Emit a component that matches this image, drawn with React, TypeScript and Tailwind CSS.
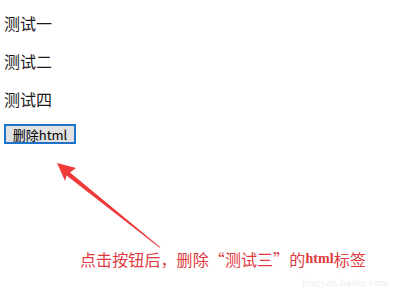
export default function App() {
  const cjk = { fontFamily: '"Noto Sans CJK SC", "Liberation Sans", sans-serif' };

  return (
    <div className="relative w-[406px] h-[298px] bg-white overflow-hidden" style={cjk}>
      <div className="flex flex-col items-start pl-[4px] pt-[12px] text-[16px] leading-[22px] text-[#1a1a1a]">
        <p>测试一</p>
        <p className="mt-[16px]">测试二</p>
        <p className="mt-[16px]">测试四</p>
        <button className="mt-[14px] w-[72px] h-[20px] flex items-center justify-center border-2 border-[#1c73c9] bg-[#e1e1e1] text-[13px] leading-none text-black">
          删除html
        </button>
      </div>

      {/* annotation arrow */}
      <svg className="absolute left-0 top-0" width="406" height="298" viewBox="0 0 406 298">
        <polygon
          points="57,163 76,168 70,172.5 160.4,247.3 159.6,247.7 66.5,175.5 65,181"
          fill="#f0393a"
        />
      </svg>

      {/* faint watermark */}
      <div className="absolute left-[302px] top-[277px] text-[11px] leading-none text-[#eeeeee] tracking-wide" style={{ fontFamily: '"Liberation Serif", serif' }}>
        jingyan.baidu.com
      </div>

      <div className="absolute left-[80px] top-[249px] flex items-center text-[16px] leading-[20px] tracking-[0.1px] text-[#e0393e]">
        <span>点击按钮后，删除“测试三”的</span>
        <span className="font-bold text-[14px]" style={{ fontFamily: '"Liberation Serif", serif' }}>html</span>
        <span>标签</span>
      </div>
    </div>
  );
}
